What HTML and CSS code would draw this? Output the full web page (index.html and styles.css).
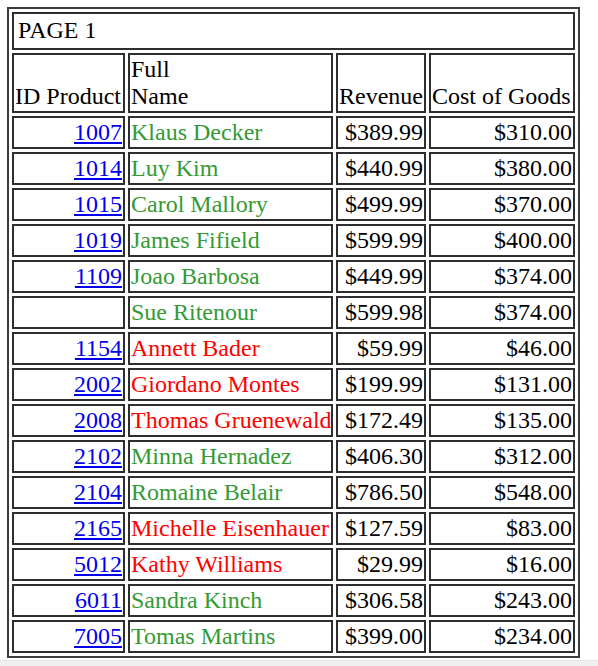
FILE: index.html
```html
<!DOCTYPE html>
<html lang="en">
<head>
<meta charset="utf-8">
<title>Product Report</title>
<link rel="stylesheet" href="styles.css">
</head>
<body>
<table class="report">
  <colgroup>
    <col class="c-id">
    <col class="c-name">
    <col class="c-rev">
    <col class="c-cost">
  </colgroup>
  <tr><td class="page" colspan="4">PAGE 1</td></tr>
  <tr class="head">
    <td>ID Product</td>
    <td>Full<br>Name</td>
    <td>Revenue</td>
    <td>Cost of Goods</td>
  </tr>
  <tr><td class="id"><a href="#">1007</a></td><td class="name ok">Klaus Decker</td><td class="num">$389.99</td><td class="num">$310.00</td></tr>
  <tr><td class="id"><a href="#">1014</a></td><td class="name ok">Luy Kim</td><td class="num">$440.99</td><td class="num">$380.00</td></tr>
  <tr><td class="id"><a href="#">1015</a></td><td class="name ok">Carol Mallory</td><td class="num">$499.99</td><td class="num">$370.00</td></tr>
  <tr><td class="id"><a href="#">1019</a></td><td class="name ok">James Fifield</td><td class="num">$599.99</td><td class="num">$400.00</td></tr>
  <tr><td class="id"><a href="#">1109</a></td><td class="name ok">Joao Barbosa</td><td class="num">$449.99</td><td class="num">$374.00</td></tr>
  <tr><td class="id"></td><td class="name ok">Sue Ritenour</td><td class="num">$599.98</td><td class="num">$374.00</td></tr>
  <tr><td class="id"><a href="#">1154</a></td><td class="name bad">Annett Bader</td><td class="num">$59.99</td><td class="num">$46.00</td></tr>
  <tr><td class="id"><a href="#">2002</a></td><td class="name bad">Giordano Montes</td><td class="num">$199.99</td><td class="num">$131.00</td></tr>
  <tr><td class="id"><a href="#">2008</a></td><td class="name bad">Thomas Gruenewald</td><td class="num">$172.49</td><td class="num">$135.00</td></tr>
  <tr><td class="id"><a href="#">2102</a></td><td class="name ok">Minna Hernadez</td><td class="num">$406.30</td><td class="num">$312.00</td></tr>
  <tr><td class="id"><a href="#">2104</a></td><td class="name ok">Romaine Belair</td><td class="num">$786.50</td><td class="num">$548.00</td></tr>
  <tr><td class="id"><a href="#">2165</a></td><td class="name bad">Michelle Eisenhauer</td><td class="num">$127.59</td><td class="num">$83.00</td></tr>
  <tr><td class="id"><a href="#">5012</a></td><td class="name bad">Kathy Williams</td><td class="num">$29.99</td><td class="num">$16.00</td></tr>
  <tr><td class="id"><a href="#">6011</a></td><td class="name ok">Sandra Kinch</td><td class="num">$306.58</td><td class="num">$243.00</td></tr>
  <tr><td class="id"><a href="#">7005</a></td><td class="name ok">Tomas Martins</td><td class="num">$399.00</td><td class="num">$234.00</td></tr>
</table>
<div class="strip"></div>
</body>
</html>
```
FILE: styles.css
```css
html, body {
  margin: 0;
  padding: 0;
  background: #ffffff;
}
body {
  font-family: "Liberation Serif", "Times New Roman", serif;
  font-size: 24px;
  line-height: 27px;
  color: #000000;
}
.report {
  margin: 7px 0 0 7px;
  width: 573px;
  table-layout: fixed;
  border-collapse: separate;
  border-spacing: 3px;
  border: 2px solid #3c3c3c;
}
.c-id { width: 113px; }
.c-name { width: 205px; }
.c-rev { width: 90px; }
.c-cost { width: 146px; }
.report td {
  border: 2px solid #2e2e2e;
  padding: 1px;
  white-space: nowrap;
  vertical-align: middle;
}
.report td.page {
  padding: 3px 4px 4px 4px;
}
.head td {
  vertical-align: bottom;
  text-align: left;
}
.report td.id,
.report td.num {
  text-align: right;
  overflow: visible;
}
.id a {
  color: #0000ee;
  text-decoration: underline;
}
.name.ok { color: #349a34; }
.name.bad { color: #ff0000; }
.strip {
  margin-top: 2px;
  height: 6px;
  background: #f0f0f0;
  border-top: 1px solid #e4e4e4;
}
```
